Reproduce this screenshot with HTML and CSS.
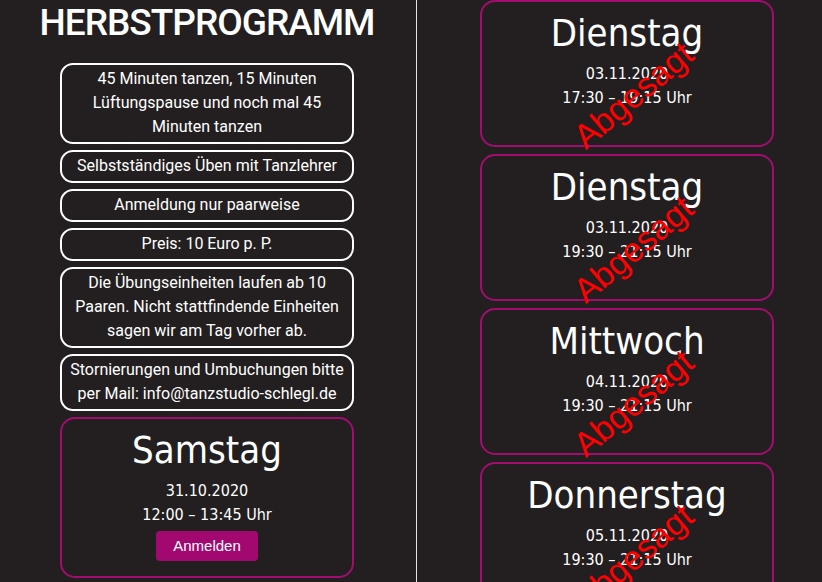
FILE: index.html
```html
<!DOCTYPE html>
<html lang="de">
<head>
<meta charset="utf-8">
<title>Herbstprogramm</title>
<link rel="stylesheet" href="styles.css">
</head>
<body>
<div class="page">
  <section class="left">
    <h1 class="title">HERBSTPROGRAMM</h1>
    <div class="info">45 Minuten tanzen, 15 Minuten Lüftungspause und noch mal 45 Minuten tanzen</div>
    <div class="info">Selbstständiges Üben mit Tanzlehrer</div>
    <div class="info">Anmeldung nur paarweise</div>
    <div class="info">Preis: 10 Euro p. P.</div>
    <div class="info">Die Übungseinheiten laufen ab 10 Paaren. Nicht stattfindende Einheiten sagen wir am Tag vorher ab.</div>
    <div class="info">Stornierungen und Umbuchungen bitte per Mail: info@tanzstudio-schlegl.de</div>
    <div class="card">
      <div class="day">Samstag</div>
      <div class="meta">31.10.2020<br>12:00 – 13:45 Uhr</div>
      <button class="btn">Anmelden</button>
    </div>
  </section>
  <section class="right">
    <div class="card cancelled">
      <div class="day">Dienstag</div>
      <div class="meta">03.11.2020<br>17:30 – 19:15 Uhr</div>
      <div class="spacer"></div>
      <span class="stamp">Abgesagt</span>
    </div>
    <div class="card cancelled">
      <div class="day">Dienstag</div>
      <div class="meta">03.11.2020<br>19:30 – 21:15 Uhr</div>
      <div class="spacer"></div>
      <span class="stamp">Abgesagt</span>
    </div>
    <div class="card cancelled">
      <div class="day">Mittwoch</div>
      <div class="meta">04.11.2020<br>19:30 – 21:15 Uhr</div>
      <div class="spacer"></div>
      <span class="stamp">Abgesagt</span>
    </div>
    <div class="card cancelled">
      <div class="day">Donnerstag</div>
      <div class="meta">05.11.2020<br>19:30 – 21:15 Uhr</div>
      <div class="spacer"></div>
      <span class="stamp">Abgesagt</span>
    </div>
  </section>
</div>
</body>
</html>
```
FILE: styles.css
```css
html, body {
  margin: 0;
  padding: 0;
  background: #231f20;
  color: #ffffff;
  overflow: hidden;
}
body {
  font-family: Roboto, "Liberation Sans", sans-serif;
}
.page {
  display: flex;
  align-items: flex-start;
}
.left {
  width: 414px;
  padding-right: 2px;
  border-right: 1px solid #e4e4e4;
  min-height: 600px;
  display: flex;
  flex-direction: column;
  align-items: center;
}
.title {
  margin: 0 0 18px;
  font-family: Roboto, sans-serif;
  font-weight: 500;
  font-size: 37px;
  letter-spacing: -1px;
  line-height: 45px;
  text-align: center;
}
.info {
  box-sizing: border-box;
  width: 294px;
  border: 2px solid #ffffff;
  border-radius: 13px;
  padding: 2px 6px 3px;
  margin-bottom: 6px;
  font-size: 16px;
  line-height: 24px;
  text-align: center;
}
.right {
  flex: 1;
  padding-left: 63px;
}
.card {
  position: relative;
  box-sizing: border-box;
  width: 294px;
  border: 2px solid #a30d70;
  border-radius: 15px;
  padding: 8px 10px 15px;
  margin-bottom: 7px;
  text-align: center;
  font-family: "DejaVu Sans Condensed", "DejaVu Sans", sans-serif;
  font-stretch: condensed;
}
.day {
  font-size: 38px;
  line-height: 46px;
}
.meta {
  margin-top: 6px;
  font-size: 16px;
  line-height: 24px;
}
.btn {
  display: block;
  margin: 4px auto 0;
  height: 30px;
  padding: 0 17px;
  border: none;
  border-radius: 4px;
  background: #a30870;
  color: #ffffff;
  font-family: "Liberation Sans", Arial, sans-serif;
  font-size: 15px;
  line-height: 30px;
}
.spacer {
  height: 20px;
}
.stamp {
  position: absolute;
  left: 50%;
  top: 50%;
  transform: translate(-50%, -50%) translate(6px, 21px) rotate(-40deg);
  color: #ff0000;
  font-family: "Liberation Sans", Arial, sans-serif;
  font-size: 34px;
  line-height: 1;
  white-space: nowrap;
  pointer-events: none;
  z-index: 2;
}
```
